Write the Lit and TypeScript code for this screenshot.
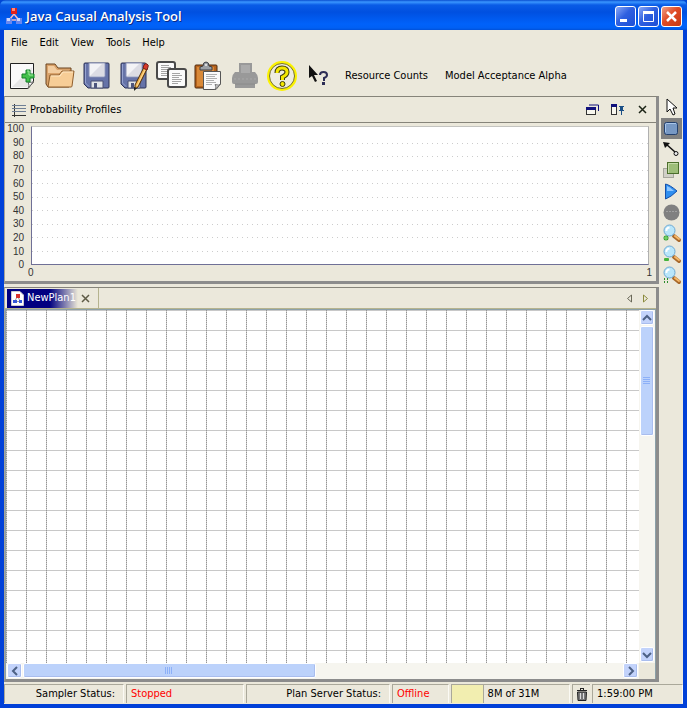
import { LitElement, html, svg, css } from "lit";
import { customElement, property } from "lit/decorators.js";
import { classMap } from "lit/directives/class-map.js";
import { styleMap } from "lit/directives/style-map.js";

const reset = css`
  * { box-sizing: border-box; }
  svg { display: block; flex: none; }
  button {
    font: inherit;
    color: inherit;
    background: none;
    border: 0;
    padding: 0;
    margin: 0;
    display: flex;
    align-items: center;
    justify-content: center;
  }
`;

const appLogo = (size: number) => html`<svg width=${size} height=${size} viewBox="0 0 16 16">
  <path d="M8 6 L4 11 M8 6 L12 11 M4 12H12" stroke="#f4b8c0" stroke-width="1.5" fill="none" />
  <rect x="5" y="0" width="6" height="6" fill="#e0201c" /><rect x="6" y="0" width="3" height="3" fill="#ff8a76" />
  <rect x="0" y="10" width="6" height="6" fill="#6a88ee" /><rect x="1" y="10" width="3" height="3" fill="#c8d6ff" />
  <rect x="10" y="10" width="6" height="6" fill="#6a88ee" /><rect x="11" y="10" width="3" height="3" fill="#c8d6ff" />
</svg>`;

const floppy = svg`
  <path d="M3 2H26Q27 2 27 3V26Q27 27 26 27H6L2 23V3Q2 2 3 2Z" fill="#6673a8" stroke="#2c3357" />
  <path d="M3.500 3V22L7 25.500" fill="none" stroke="#97a3d0" />
  <path d="M7 2H23V15Q23 16 22 16H8Q7 16 7 15Z" fill="#f3f3f6" stroke="#8790b6" />
  <path d="M8 15L20 3H22V15Z" fill="#dcdce4" />
  <path d="M9 20H21V27H9Z" fill="#e2e4e8" stroke="#4a5175" />
  <rect x="12" y="22" width="3" height="5" fill="#4d557d" />`;

const textLines = (x: number, y: number) => svg`
  <path d="M${x} ${y + 0.5}h8m-8 2h10m-10 2h7m-7 2h10m-10 2h9m-9 2h6" fill="none" stroke="#a4a4a4" />`;

const toolIcons = [
  { label: "New", art: svg`
    <path d="M2.500 2.500H25.500V21L20 27.500H2.500Z" fill="#fafafa" stroke="#222" />
    <path d="M4 26L24 6V20L19 26Z" fill="#e6e6e6" />
    <path d="M20 27.500Q22 24 20 21Q24 22 25.500 20.500Z" fill="#fff" stroke="#666" />
    <path d="M18 9H22V13H26V17H22V21H18V17H14V13H18Z" fill="#43c14b" stroke="#14802a" />
    <path d="M19 10H21V14H25" fill="none" stroke="#a5eba0" />` },
  { label: "Open", art: svg`
    <path d="M1 3H10L13 7H26V12L24 26H3L1 23Z" fill="#d9a26a" stroke="#6a4420" />
    <path d="M3 5H9L12 9H24V12H3Z" fill="#f3cda0" />
    <path d="M5 14H14L17 10H29L27 25Q27 26 26 26H3Z" fill="#f7cd96" stroke="#8f5d2b" />
    <path d="M6 15H15L18 11H28" fill="none" stroke="#ffe8c4" />` },
  { label: "Save", art: floppy },
  { label: "Save As", art: svg`${floppy}
    <path d="M25 6L28 8L19 26L16 28L16 24Z" fill="#f2b24a" stroke="#4b2d10" />
    <path d="M26 9L18 25" stroke="#ffe0a0" />
    <path d="M24 7L25 4Q26 2 28 3Q30 4 29 6L28 9Z" fill="#d93a2c" stroke="#742018" />
    <path d="M15 26L18 27L15 30Z" fill="#222" />` },
  { label: "Copy", art: svg`
    <rect x="1" y="1" width="18" height="17" rx="2" fill="#fbfbfb" stroke="#4a4a4a" stroke-width="2" />
    ${textLines(5, 4)}
    <rect x="12" y="8" width="18" height="18" rx="2" fill="#fbfbfb" stroke="#4a4a4a" stroke-width="2" />
    ${textLines(16, 12)}` },
  { label: "Paste", art: svg`
    <rect x="2" y="4" width="22" height="23" rx="1" fill="#b8641c" stroke="#4f2b0e" />
    <rect x="4" y="6" width="17" height="19" fill="#d98938" />
    <path d="M7 9V6L10 5Q10 1 13 1Q16 1 16 5L19 6V9Z" fill="#9ba0a6" stroke="#3c3f45" />
    <circle cx="13" cy="4" r="1" fill="#eee" />
    <path d="M10.500 10.500H27.500V23L23 28.500H10.500Z" fill="#fafafa" stroke="#555" />
    <path d="M13 13.500h11m-11 2h9m-9 2h11m-11 2h8m-8 2h10m-10 2h6" fill="none" stroke="#b0b0b0" />
    <path d="M22 28.500Q24 26 22 23.500Q26 25 27.500 23Z" fill="#ddd" stroke="#777" />` },
  { label: "Print", art: svg`
    <path d="M9 2H22V11H25Q28 14 28 17V21Q28 23 26 23H25V27H5V23H4Q2 23 2 21V17Q2 14 5 11H9Z" fill="#999" />
    <path d="M11 4H20V12H11Z" fill="#ababab" /><path d="M4 18H26" stroke="#a8a8a8" stroke-dasharray="2 2" /><path d="M5 23H25" stroke="#8a8a8a" />` },
  { label: "Help", art: svg`
    <circle cx="15" cy="15" r="15" fill="#fbf200" />
    <circle cx="15" cy="15" r="12.500" fill="#eeecdf" stroke="#77712a" />
    <path d="M10 12Q10 7 15 7Q20 7 20 11Q20 14 15.500 16V19" fill="none" stroke="#3f3c10" stroke-width="5" />
    <path d="M10 12Q10 7 15 7Q20 7 20 11Q20 14 15.500 16V19" fill="none" stroke="#f4e800" stroke-width="3" />
    <circle cx="15.500" cy="23" r="2.500" fill="#f4e800" stroke="#3f3c10" />` },
  { label: "Context Help", art: svg`
    <path d="M5 4V17L8 15L11 21L13 20L10 14H14Z" fill="#111" />
    <path d="M16 14Q16 11 19.500 11Q23 11 23 14Q23 16 20 17V20" fill="none" stroke="#2d2d55" stroke-width="2" />
    <rect x="18" y="21" width="3" height="3" fill="#2d2d55" />` },
];

const magnifier = (mark: unknown) => svg`
  <path d="M13 13L18 17" stroke="#a8682a" stroke-width="4" stroke-linecap="round" />
  <path d="M14 13L18 16" stroke="#f6b868" stroke-width="2" stroke-linecap="round" />
  <circle cx="8.500" cy="7.500" r="5.500" fill="#b9e6fa" stroke="#6ea9d4" />
  <path d="M5.500 8Q5 5 8.500 4.500" fill="none" stroke="#fff" stroke-width="2" />${mark}`;

const paletteIcons = [
  { label: "Select", art: svg`<path d="M6 2V15L9 12L12 18L14 17L12 11H16Z" fill="#fff" stroke="#111" />` },
  { label: "Node", art: svg`<rect x="3.500" y="4.500" width="13" height="12" rx="2" fill="#7798c4" stroke="#23406e" />
      <path d="M4.500 14V6Q5 5.500 6 5.500H15" fill="none" stroke="#a9c6ea" />` },
  { label: "Link", art: svg`<path d="M5 5L14 13" stroke="#111" stroke-width="1.500" />
      <path d="M2 3L9 4L4 9Z" fill="#111" /><circle cx="15" cy="14.500" r="2" fill="#eee" stroke="#111" />` },
  { label: "Group", art: svg`<rect x="2.500" y="8.500" width="10" height="9" fill="#d0cfc6" stroke="#a6a69c" />
      <rect x="6.500" y="2.500" width="11" height="11" fill="#9dbd78" stroke="#4b6e2b" />
      <path d="M7.500 13V3.500H17" fill="none" stroke="#c5dba9" />` },
  { label: "Run", art: svg`<path d="M4.500 3Q9 4 16 10Q10 16 4.500 18Z" fill="#2f8ff0" stroke="#1650a8" stroke-linejoin="round" />
      <path d="M6 5Q9 6 13 10H6Z" fill="#8cc6ff" />` },
  { label: "Stop", art: svg`<circle cx="10.500" cy="10.500" r="8" fill="#808080" /><path d="M5 9.500H16" stroke="#a0a0a0" stroke-dasharray="2 1" />` },
  { label: "Zoom In", art: magnifier(svg`<circle cx="5" cy="15" r="2.500" fill="#2f9a2f" /><path d="M5 13V17M3 15H7" stroke="#8be07b" />`) },
  { label: "Zoom Out", art: magnifier(svg`<rect x="3" y="14" width="5" height="3" rx="1" fill="#43b43c" />`) },
  { label: "Zoom Fit", art: magnifier(svg`<path d="M3 14h1M6 14h1M3 17h1M6 17h1" stroke="#2e8c2e" stroke-width="2" />`) },
];

@customElement("title-bar")
class TitleBar extends LitElement {
  static styles = [reset, css`
    :host { display: block; flex: none; }
    .bar {
      height: 30px;
      padding: 2px 5px 0 6px;
      display: flex;
      align-items: center;
      gap: 4px;
      border-radius: 6px 6px 0 0;
      background: linear-gradient(#0a4fd0 0, #3a96ff 2px, #0a5ce6 5px, #0050e0 12px, #0062fa 24px, #0060f4 28px, #0050d8 30px);
    }
    h1 {
      flex: 1;
      margin: 0;
      font: 600 13px/18px "Open Sans", "Noto Sans", sans-serif;
      color: #fff;
      text-shadow: 1px 1px 0 #0a2a86;
      white-space: nowrap;
    }
    .controls { display: flex; gap: 2px; }
    .control {
      width: 21px;
      height: 21px;
      border: 1px solid #fff;
      border-radius: 3px;
      background: linear-gradient(135deg, #8aa8f6, #2f60e0 45%, #1c4fd6);
    }
    .close { background: linear-gradient(135deg, #f0a088, #e04a24 45%, #c83a14); }
  `];
  render() {
    return html`<header class="bar">
      ${appLogo(16)}
      <h1>Java Causal Analysis Tool</h1>
      <div class="controls">
        <button class="control" aria-label="Minimize"><svg width="19" height="19"><rect x="4" y="12" width="7" height="3" fill="#fff" /></svg></button>
        <button class="control" aria-label="Maximize"><svg width="19" height="19"><path d="M4.500 4V14.500H14.500V4" fill="none" stroke="#fff" /><rect x="4" y="4" width="11" height="3" fill="#fff" /></svg></button>
        <button class="control close" aria-label="Close"><svg width="19" height="19"><path d="M5 5L14 14M14 5L5 14" stroke="#fff" stroke-width="2.500" /></svg></button>
      </div>
    </header>`;
  }
}

@customElement("profile-panel")
class ProfilePanel extends LitElement {
  private ticks = [100, 90, 80, 70, 60, 50, 40, 30, 20, 10, 0];
  static styles = [reset, css`
    :host { display: block; }
    .head {
      height: 26px;
      padding: 0 5px 0 7px;
      display: flex;
      align-items: center;
      gap: 4px;
      border-bottom: 1px solid #86847a;
    }
    h2 { flex: 1; margin: 0; font: inherit; }
    .actions { display: flex; gap: 8px; }
    .actions button { width: 17px; height: 16px; }
    .chart {
      height: 158px;
      padding-right: 7px;
      display: grid;
      grid-template-columns: 26px 1fr;
      font: 10px/12px "Liberation Sans", Arial, sans-serif;
      color: #333;
    }
    .scale {
      height: 150px;
      padding-right: 7px;
      display: grid;
      grid-template-rows: repeat(11, 1fr);
      text-align: right;
    }
    .plot {
      height: 139px;
      margin-top: 3px;
      padding-top: 2px;
      background: #fff;
      border: 1px solid #6f7096;
      border-top-color: #c4c4c0;
      border-right-color: #b0b0b0;
      display: grid;
      grid-template-rows: repeat(10, 1fr);
    }
    .band { background: repeating-linear-gradient(90deg, #ccc 0 1px, transparent 1px 5px) 0 0 / 100% 1px no-repeat; }
    .band:first-child { background: none; }
    .range { display: flex; justify-content: space-between; margin: 0 -3px; line-height: 16px; }
  `];
  render() {
    return html`
      <div class="head">
        <svg width="14" height="14"><path d="M2.500 1V14M0 12.500H14" stroke="#333" /><path d="M0 2.500H14M0 5.500H14M0 8.500H14" stroke="#6f7f96" /></svg>
        <h2>Probability Profiles</h2>
        <div class="actions">
          <button aria-label="Float"><svg width="14" height="12"><path d="M3 1H12.500V7" fill="none" stroke="#10107c" /><rect x=".5" y="3.500" width="9" height="7" fill="#f7f6ee" stroke="#333" /><rect x="0" y="3" width="10" height="3" fill="#10107c" /></svg></button>
          <button aria-label="Pin"><svg width="14" height="12"><rect x=".5" y=".5" width="5" height="10" fill="#f7f6ee" stroke="#333" /><rect x="0" y="0" width="6" height="3" fill="#10107c" /><path d="M8 2H13V3H12V6H13V7H8V6H9V3H8ZM10 7H11V11H10Z" fill="#1b4f86" /></svg></button>
          <button aria-label="Close panel"><svg width="10" height="10"><path d="M1 1L8 8M8 1L1 8" stroke="#1c2416" stroke-width="1.500" /></svg></button>
        </div>
      </div>
      <div class="chart">
        <div class="scale">${this.ticks.map((t) => html`<span>${t}</span>`)}</div>
        <div>
          <div class="plot">${this.ticks.slice(1).map(() => html`<div class="band"></div>`)}</div>
          <div class="range"><span>0</span><span>1</span></div>
        </div>
      </div>`;
  }
}

@customElement("scroll-strip")
class ScrollStrip extends LitElement {
  @property() direction: "vertical" | "horizontal" = "vertical";
  @property({ type: Number }) portion = 0.3;
  static styles = [reset, css`
    :host { display: block; }
    .strip { height: 100%; display: flex; gap: 1px; padding: 1px; background: #f6f5ef; }
    .vertical { flex-direction: column; padding-top: 0; }
    .horizontal { padding: 0 1px 1px; }
    .step, .thumb {
      flex: none;
      border: 1px solid #fff;
      border-radius: 2px;
      background: #c3d3fb;
      box-shadow: inset -1px -1px 0 #a9bdee;
    }
    .step { width: 14px; height: 15px; }
    .horizontal .step { width: 15px; height: 15px; }
    .track { flex: 1; display: flex; min-width: 0; min-height: 0; }
    .vertical .track { flex-direction: column; }
    .thumb { display: flex; align-items: center; justify-content: center; background: #bcd2fb; }
    .vertical .thumb { width: 14px; }
    .horizontal .thumb { height: 15px; }
  `];
  render() {
    const vertical = this.direction === "vertical";
    const share = `${this.portion * 100}%`;
    const size = vertical ? { height: share } : { width: share };
    const arrow = (d: string, label: string) => html`<button class="step" aria-label=${label}>
      <svg width="10" height="10"><path d=${d} fill="none" stroke="#4d6185" stroke-width="2" /></svg></button>`;
    return html`<div class=${classMap({ strip: true, vertical, horizontal: !vertical })}>
      ${vertical ? arrow("M1 7L5 3L9 7", "Scroll up") : arrow("M7 1L3 5L7 9", "Scroll left")}
      <div class="track"><div class="thumb" style=${styleMap(size)}>
        <svg width="8" height="8"><path d=${vertical ? "M0 .5H7M0 2.500H7M0 4.500H7M0 6.500H7" : "M.5 0V7M2.500 0V7M4.500 0V7M6.500 0V7"} stroke="#8cb0f8" /></svg>
      </div></div>
      ${vertical ? arrow("M1 3L5 7L9 3", "Scroll down") : arrow("M3 1L7 5L3 9", "Scroll right")}
    </div>`;
  }
}

@customElement("plan-editor")
class PlanEditor extends LitElement {
  static styles = [reset, css`
    :host { display: flex; flex-direction: column; }
    .tabs {
      height: 21px;
      padding: 0 2px;
      display: flex;
      justify-content: space-between;
      border-bottom: 1px solid #b5b38e;
    }
    .tab { display: flex; align-items: center; border-right: 1px solid #b5b38e; }
    .name {
      height: 19px;
      width: 71px;
      padding-left: 4px;
      gap: 3px;
      justify-content: flex-start;
      color: #fff;
      background: linear-gradient(90deg, #000080 60%, #ece9d8);
    }
    .shut { width: 14px; height: 19px; margin-right: 6px; }
    .nav { display: flex; }
    .nav button { width: 16px; }
    .view {
      flex: 1;
      display: grid;
      grid-template: 1fr 16px / 1fr 16px;
      border: solid #8ba0a8;
      border-width: 1px 1px 0 1px;
    }
    .canvas { width: 100%; height: 100%; background: #fff; }
  `];
  render() {
    return html`
      <div class="tabs">
        <div class="tab">
          <button class="name">
            <svg width="13" height="15"><path d="M.5 .5H9L12.500 4V14.500H.5Z" fill="#fff" stroke="#ccc" /><path d="M6 6L4 10M7 6L9 10M4 10.500H9" stroke="#999" /><rect x="5" y="3" width="4" height="4" fill="#d8322a" /><rect x="2" y="9" width="4" height="3" fill="#3558d8" /><rect x="8" y="9" width="3" height="3" fill="#3558d8" /></svg>
            NewPlan1
          </button>
          <button class="shut" aria-label="Close tab"><svg width="9" height="9"><path d="M1 1L8 8M8 1L1 8" stroke="#5e5b46" stroke-width="1.500" /></svg></button>
        </div>
        <div class="nav">
          <button aria-label="Previous tab"><svg width="6" height="9"><path d="M4.500 1V8L.5 4.500Z" fill="none" stroke="#6a6858" /></svg></button>
          <button aria-label="Next tab"><svg width="6" height="9"><path d="M.5 1V8L4.500 4.500Z" fill="none" stroke="#8b8a3c" /></svg></button>
        </div>
      </div>
      <div class="view">
        <svg class="canvas">
          <defs><pattern id="grid" width="20" height="20" patternUnits="userSpaceOnUse">
            <path d="M0 .5H20" stroke="#c8c8c8" />
            <path d="M.5 0V20" stroke="#ccc" /><path d="M.5 0V20" stroke="#949494" stroke-dasharray="1 1" />
          </pattern></defs>
          <rect width="100%" height="100%" fill="url(#grid)" />
        </svg>
        <scroll-strip direction="vertical" .portion=${0.345}></scroll-strip>
        <scroll-strip direction="horizontal" .portion=${0.489}></scroll-strip>
      </div>`;
  }
}

@customElement("status-bar")
class StatusBar extends LitElement {
  private used = 8;
  private total = 31;
  static styles = [reset, css`
    :host { display: block; flex: none; }
    .bar {
      height: 22px;
      padding: 2px 0 1px;
      display: grid;
      grid-template-columns: 120fr 118fr 144fr 57fr 119fr 18px 91px;
      column-gap: 2px;
      line-height: 17px;
      white-space: nowrap;
    }
    .cell { border: solid #aaa89a; border-width: 1px 0 0 1px; border-right: 1px solid #fbfaf4; padding: 0 4px; }
    .caption { text-align: right; padding-right: 8px; }
    .alert { color: #f00; }
    .memory { display: flex; gap: 4px; padding: 0; }
    .used { background: #f2eeb0; border-right: 1px solid #aaa89a; }
    .trash { border-width: 1px 0 0 1px; border-style: solid; border-color: #aaa89a; }
  `];
  render() {
    return html`<footer class="bar">
      <div class="cell caption">Sampler Status:</div>
      <div class="cell alert">Stopped</div>
      <div class="cell caption">Plan Server Status:</div>
      <div class="cell alert">Offline</div>
      <div class="cell memory">
        <div class="used" style=${styleMap({ width: `${Math.ceil((this.used / this.total) * 100) + 1}%` })}></div>
        <span>${this.used}M of ${this.total}M</span>
      </div>
      <button class="trash" aria-label="Collect garbage"><svg width="12" height="14"><path d="M1 3.500H11M4 1.500H8M4.500 1V3M7.500 1V3" stroke="#222" /><path d="M1.500 5H10.500L10 13.500H2Z" fill="#777" stroke="#222" /><path d="M4.500 6V12M7.500 6V12" stroke="#ddd" /></svg></button>
      <div class="cell">1:59:00 PM</div>
    </footer>`;
  }
}

@customElement("app-root")
class AppRoot extends LitElement {
  static styles = [reset, css`
    :host {
      display: flex;
      flex-direction: column;
      min-height: 100vh;
      background: #0046d5;
      font: 11px/14px "DejaVu Sans Condensed", Tahoma, sans-serif;
      color: #000;
    }
    .client {
      flex: 1;
      border: solid #0040d8;
      border-width: 0 4px 4px;
      display: flex;
      flex-direction: column;
      background: #ebe8db;
    }
    .menu { height: 26px; padding: 0 7px; display: flex; gap: 12px; }
    .tools { height: 40px; padding: 0 1px; display: flex; }
    .tool { width: 37px; height: 40px; }
    .text { margin-left: 7px; margin-right: 10px; }
    .work { flex: 1; display: flex; gap: 2px; }
    .panels { flex: 1; min-width: 0; display: flex; flex-direction: column; gap: 3px; }
    .panel {
      border: 1px solid #86847a;
      border-color: #86847a #8c8c8c #8c8c8c #a5a398;
      border-width: 1px 3px 3px 1px;
    }
    .grow { flex: 1; }
    .palette { width: 22px; padding-top: 1px; }
    .pick { width: 21px; height: 21px; }
    .on { background: #808080; }
  `];
  render() {
    return html`
      <title-bar></title-bar>
      <main class="client">
        <nav class="menu">${["File", "Edit", "View", "Tools", "Help"].map((m) => html`<button>${m}</button>`)}</nav>
        <div class="tools">
          ${toolIcons.map((t) => html`<button class="tool" aria-label=${t.label}><svg width="31" height="30">${t.art}</svg></button>`)}
          <button class="text">Resource Counts</button>
          <button class="text">Model Acceptance Alpha</button>
        </div>
        <div class="work">
          <div class="panels">
            <profile-panel class="panel"></profile-panel>
            <plan-editor class="panel grow"></plan-editor>
          </div>
          <div class="palette">
            ${paletteIcons.map((p, i) => html`<button class=${classMap({ pick: true, on: i === 1 })} aria-label=${p.label}><svg width="21" height="21">${p.art}</svg></button>`)}
          </div>
        </div>
        <status-bar></status-bar>
      </main>`;
  }
}
